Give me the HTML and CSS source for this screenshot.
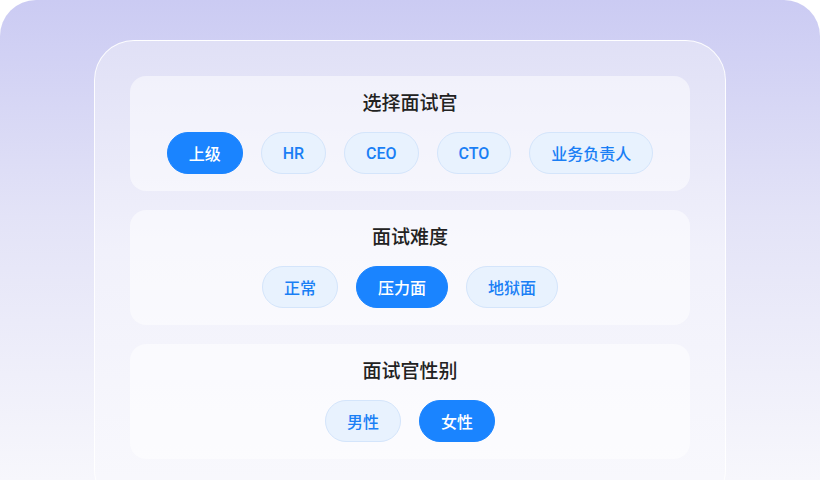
FILE: index.html
```html
<!DOCTYPE html>
<html lang="zh-CN">
<head>
  <meta charset="UTF-8">
  <meta name="viewport" content="width=device-width, initial-scale=1.0">
  <title>面试设置</title>
  <link rel="stylesheet" href="styles.css">
</head>
<body>
  <div class="backdrop">
    <div class="panel">
      <div class="section">
        <div class="section-title">选择面试官</div>
        <div class="chips">
          <button class="chip chip-active">上级</button>
          <button class="chip">HR</button>
          <button class="chip">CEO</button>
          <button class="chip">CTO</button>
          <button class="chip">业务负责人</button>
        </div>
      </div>

      <div class="section">
        <div class="section-title">面试难度</div>
        <div class="chips">
          <button class="chip">正常</button>
          <button class="chip chip-active">压力面</button>
          <button class="chip">地狱面</button>
        </div>
      </div>

      <div class="section">
        <div class="section-title">面试官性别</div>
        <div class="chips">
          <button class="chip">男性</button>
          <button class="chip chip-active">女性</button>
        </div>
      </div>
    </div>
  </div>
</body>
</html>
```

FILE: styles.css
```css
html, body {
  margin: 0;
  padding: 0;
  background-color: #ffffff;
  font-family: Inter, "Noto Sans CJK SC", sans-serif;
  overflow: hidden;
}
.backdrop {
  width: 820px;
  height: 480px;
  box-sizing: border-box;
  padding: 40px 94px 0;
  border-radius: 36px 36px 0 0;
  background: linear-gradient(180deg, #cbcbf3 0%, #e3e3f7 45%, #f7f7fc 100%);
  overflow: hidden;
}
.panel {
  box-sizing: border-box;
  height: 470px;
  padding: 35px 35px 0;
  border: 1px solid rgba(255, 255, 255, 0.9);
  border-radius: 40px;
  background: linear-gradient(180deg, #e0e0f6 0%, #f1f1fb 45%, #f9f9fd 100%);
  display: flex;
  flex-direction: column;
  gap: 19px;
}
.section {
  padding: 15px 0 17px;
  border-radius: 16px;
  background-color: rgba(255, 255, 255, 0.5);
  display: flex;
  flex-direction: column;
  align-items: center;
  gap: 16px;
}
.section-title {
  font-size: 19px;
  line-height: 25px;
  font-weight: 500;
  color: #222222;
}
.chips {
  display: flex;
  justify-content: center;
  gap: 18px;
}
.chip {
  height: 42px;
  padding: 0 21px;
  border-radius: 21px;
  border: 1px solid #d4e5fb;
  background-color: #e8f2fe;
  color: #1a7ff5;
  font-family: Roboto, "Noto Sans CJK SC", sans-serif;
  font-size: 16px;
  font-weight: 500;
  cursor: pointer;
}
.chip-active {
  background-color: #1a84ff;
  border-color: #1a84ff;
  color: #ffffff;
}
```
